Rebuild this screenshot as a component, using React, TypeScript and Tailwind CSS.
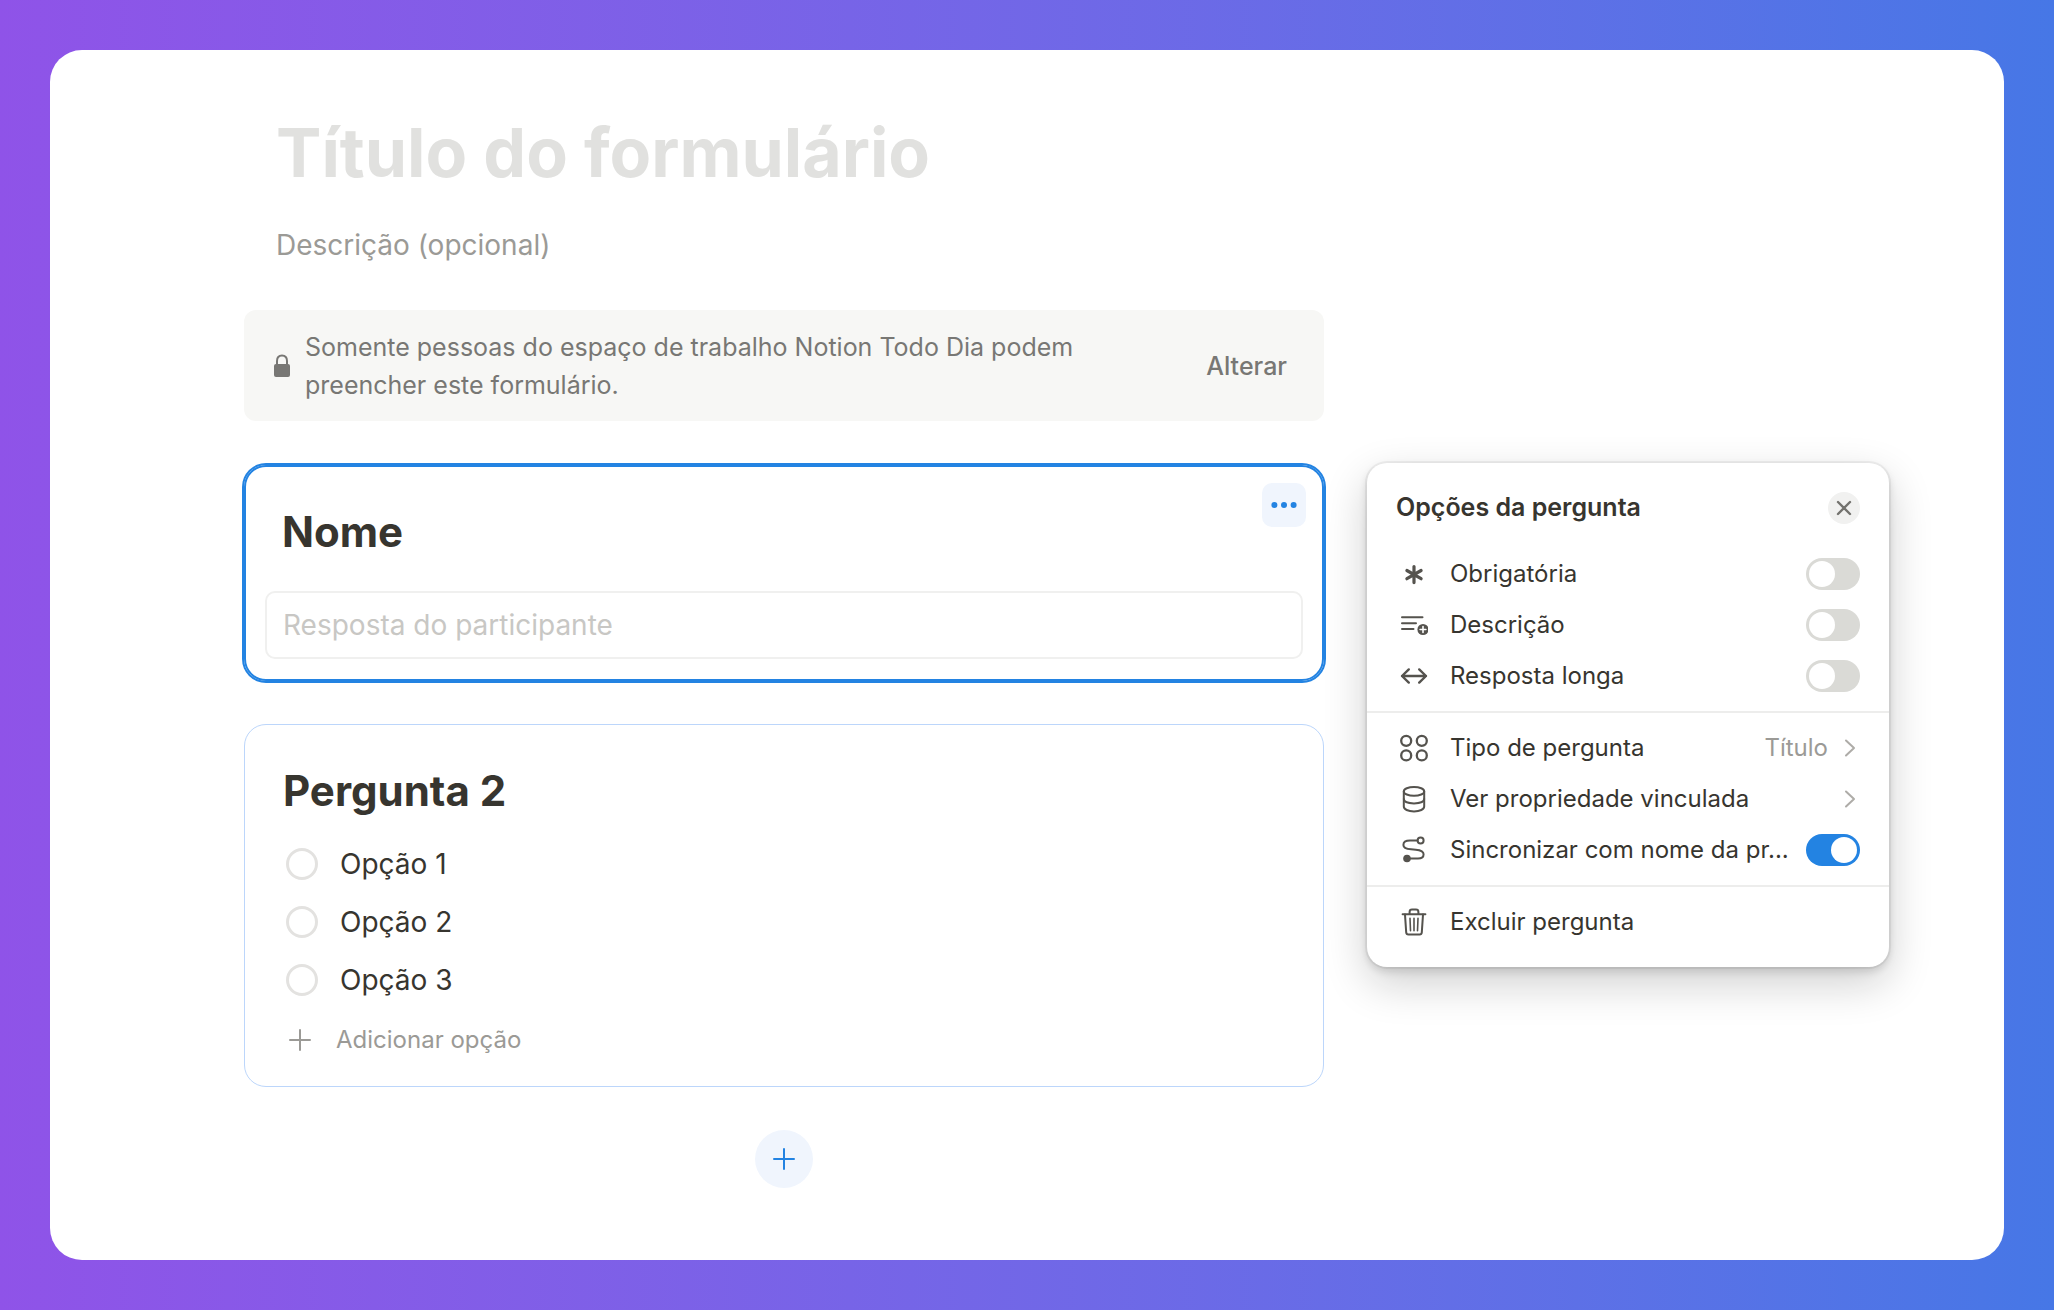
import React from "react";

type IconProps = { children: React.ReactNode; className?: string };

// Shared frame for the 28px menu icons
const Icon: React.FC<IconProps> = ({ children, className = "text-[#55534e]" }) => (
  <svg
    viewBox="0 0 28 28"
    fill="none"
    stroke="currentColor"
    strokeWidth="2"
    strokeLinecap="round"
    strokeLinejoin="round"
    className={`size-7 shrink-0 ${className}`}
    aria-hidden="true"
  >
    {children}
  </svg>
);

const AsteriskIcon = () => (
  <Icon>
    <path d="M14 6.6v16M6.9 10.5l14.2 8.2M21.1 10.5L6.9 18.7" strokeWidth="3.2" />
  </Icon>
);

const DescriptionIcon = () => (
  <Icon>
    <path d="M2 6.3h20.5M2 12.3h14M2 18h11.5" />
    <circle cx="23" cy="18.5" r="5.6" fill="currentColor" stroke="none" />
    <path d="M23 15.6v5.8M20.1 18.5h5.8" stroke="white" strokeWidth="1.6" />
  </Icon>
);

const WidthIcon = () => (
  <Icon>
    <path d="M2 14h24M8.8 7.4L2 14l6.800 6.600M19.200 7.400L26 14l-6.800 6.600" strokeWidth="2.4" />
  </Icon>
);

const CirclesIcon = () => (
  <Icon>
    <circle cx="6.2" cy="6.8" r="5" strokeWidth="2.3" />
    <circle cx="21.8" cy="6.8" r="5" strokeWidth="2.3" />
    <circle cx="6.2" cy="21.4" r="5" strokeWidth="2.3" />
    <circle cx="21.8" cy="21.4" r="5" strokeWidth="2.3" />
  </Icon>
);

const DatabaseIcon = () => (
  <Icon>
    <ellipse cx="14" cy="6.4" rx="10.2" ry="4.4" />
    <path d="M3.8 6.4v15.2c0 2.7 4.2 4.8 10.2 4.8s10.2-2.1 10.2-4.8V6.4" />
    <path d="M3.8 14c0 2.6 4.2 4.4 10.2 4.4s10.2-1.8 10.2-4.4" />
  </Icon>
);

const RouteIcon = () => (
  <Icon>
    <circle cx="20.6" cy="4.6" r="3" />
    <path d="M17.4 4.6H10c-4.2 0-6.6 1.8-6.6 4.3 0 3.1 3.2 4.1 7.6 4.4l4.8.4c4.8.4 7.8 1.7 7.8 4.6 0 2.6-2.2 4.2-5.6 4.2H8" />
    <circle cx="7" cy="22.5" r="3.8" fill="currentColor" stroke="none" />
  </Icon>
);

const TrashIcon = () => (
  <Icon>
    <path d="M2.6 6.3h22.8M9.6 6V4c0-1.5.9-2.4 2.4-2.4h4c1.5 0 2.400.9 2.400 2.400v2" />
    <path d="M5 6.6l1.2 17.8c.1 1.3.9 2.1 2.2 2.1h11.2c1.3 0 2.1-.8 2.2-2.1L23 6.6" />
    <path d="M10 10.3l.5 12.4M14 10.3v12.4M18 10.3l-.5 12.4" strokeWidth="1.6" />
  </Icon>
);

const PlusIcon: React.FC<{ className: string }> = ({ className }) => (
  <Icon className={className}>
    <path d="M14 4v20M4 14h20" />
  </Icon>
);

const Chevron = () => (
  <svg
    viewBox="0 0 20 20"
    fill="none"
    stroke="#aeaca8"
    strokeWidth="2"
    strokeLinecap="round"
    strokeLinejoin="round"
    className="size-5 shrink-0"
    aria-hidden="true"
  >
    <path d="M6 2.5l8 7.5-8 7.5" />
  </svg>
);

type ToggleRowProps = {
  id: string;
  label: string;
  icon: React.ReactNode;
  checked?: boolean;
};

const ToggleRow: React.FC<ToggleRowProps> = ({ id, label, icon, checked }) => (
  <div className="flex h-[50px] items-center pr-[29px] pl-[33px]">
    {icon}
    <label htmlFor={id} className="ml-[22px] flex-1 whitespace-nowrap">
      {label}
    </label>
    <input
      id={id}
      type="checkbox"
      role="switch"
      defaultChecked={checked}
      className="flex h-8 w-[54px] shrink-0 cursor-pointer appearance-none items-center rounded-full bg-[#dadad6] px-[3px] before:size-[26px] before:rounded-full before:bg-white checked:justify-end checked:bg-[#2383e2]"
    />
  </div>
);

type MenuRowProps = {
  label: string;
  icon: React.ReactNode;
  value?: string;
  chevron?: boolean;
};

const MenuRow: React.FC<MenuRowProps> = ({ label, icon, value, chevron }) => (
  <button type="button" className="flex h-[50px] items-center pr-[29px] pl-[33px] text-left">
    {icon}
    <span className="ml-[22px] flex-1">{label}</span>
    {value && <span className="mr-3 text-[#9b9a96]">{value}</span>}
    {chevron && <Chevron />}
  </button>
);

// Floating panel on the right of the selected question
const QuestionOptions = () => (
  <aside
    className="mt-[413px] flex w-[522px] shrink-0 flex-col rounded-[20px] bg-white pt-1 pb-5 text-2xl text-[#37352f] shadow-[0_0_0_2px_rgba(15,15,15,0.05),0_4px_8px_rgba(15,15,15,0.14),0_16px_44px_rgba(15,15,15,0.2)]"
    aria-label="Opções da pergunta"
  >
    <header className="flex h-[82px] items-center justify-between px-[29px]">
      <h2 className="text-[25px] font-semibold">Opções da pergunta</h2>
      <button
        type="button"
        aria-label="Fechar"
        className="flex size-8 items-center justify-center rounded-full bg-[#f1f1f0]"
      >
        <svg viewBox="0 0 16 16" className="size-4" stroke="#73726e" strokeWidth="2.4" strokeLinecap="round">
          <path d="M2 2l12 12M14 2L2 14" />
        </svg>
      </button>
    </header>

    <div className="flex flex-col gap-px border-b-2 border-[#ededec] pb-[10px]">
      <ToggleRow id="required" label="Obrigatória" icon={<AsteriskIcon />} />
      <ToggleRow id="description" label="Descrição" icon={<DescriptionIcon />} />
      <ToggleRow id="long-answer" label="Resposta longa" icon={<WidthIcon />} />
    </div>

    <div className="flex flex-col gap-px border-b-2 border-[#ededec] py-[10px]">
      <MenuRow label="Tipo de pergunta" icon={<CirclesIcon />} value="Título" chevron />
      <MenuRow label="Ver propriedade vinculada" icon={<DatabaseIcon />} chevron />
      <ToggleRow id="sync-name" label="Sincronizar com nome da pr..." icon={<RouteIcon />} checked />
    </div>

    <div className="flex flex-col pt-[10px]">
      <MenuRow label="Excluir pergunta" icon={<TrashIcon />} />
    </div>
  </aside>
);

const options = ["Opção 1", "Opção 2", "Opção 3"];

const App: React.FC = () => {
  return (
    <div className="flex min-h-screen bg-linear-to-r from-[#8f53e8] to-[#4677e6] p-[50px] font-['Inter','Liberation_Sans',sans-serif]">
      <main className="flex min-w-0 flex-1 items-start gap-[43px] rounded-[32px] bg-white pr-[115px] pl-[194px]">
        <form className="flex min-w-0 flex-1 flex-col pt-[60px] pb-[72px]">
          <input
            aria-label="Título do formulário"
            placeholder="Título do formulário"
            className="mx-8 h-[84px] text-[68px] font-bold outline-none placeholder:text-[#e1e1df]"
          />
          <input
            aria-label="Descrição"
            placeholder="Descrição (opcional)"
            className="mx-8 mt-[31px] h-10 text-[28px] outline-none placeholder:text-[#9b9a96]"
          />

          {/* Access notice */}
          <div className="mt-[45px] flex items-center rounded-xl bg-[#f7f7f5] pt-[18px] pr-[37px] pb-[17px] pl-[29px] text-[25px] leading-[38px] text-[#787774]">
            <svg viewBox="0 0 18 24" className="h-6 w-[18px] shrink-0" aria-hidden="true">
              <rect x="1" y="10" width="16" height="13" rx="2" fill="currentColor" />
              <path d="M4 11V7c0-3.4 2-5.500 5-5.500s5 2.100 5 5.500v4" fill="none" stroke="currentColor" strokeWidth="2" />
            </svg>
            <p className="ml-[14px] max-w-[780px]">
              Somente pessoas do espaço de trabalho Notion Todo Dia podem preencher este formulário.
            </p>
            <button type="button" className="ml-auto font-medium">
              Alterar
            </button>
          </div>

          {/* Selected question */}
          <section className="relative mt-11 flex flex-col rounded-[22px] border-2 border-[#2383e2] px-[19px] pt-[39px] pb-5 ring-2 ring-[#2383e2]">
            <button
              type="button"
              aria-label="Mais opções"
              className="absolute top-4 right-4 flex size-11 items-center justify-center rounded-[10px] bg-[#f0f5fd]"
            >
              <svg viewBox="0 0 26 8" className="h-2 w-[26px] fill-[#2383e2]">
                <circle cx="3.4" cy="4" r="3" />
                <circle cx="13" cy="4" r="3" />
                <circle cx="22.6" cy="4" r="3" />
              </svg>
            </button>
            <label htmlFor="name" className="mx-[17px] text-[42px] leading-[52px] font-bold text-[#37352f]">
              Nome
            </label>
            <input
              id="name"
              placeholder="Resposta do participante"
              className="mt-[33px] h-[68px] rounded-[10px] border-2 border-[#f0f0ef] px-4 text-[28px] outline-none placeholder:text-[#c8c7c4]"
            />
          </section>

          {/* Multiple choice question */}
          <fieldset className="mt-[43px] flex flex-col rounded-[22px] border border-[#bcd6fb] px-[38px] pt-10 pb-6 text-[28px] text-[#37352f]">
            <h3 className="text-[42px] leading-[52px] font-bold">Pergunta 2</h3>
            <div className="mt-[18px] flex flex-col">
              {options.map((option) => (
                <label key={option} className="flex h-[58px] items-center gap-[22px] pl-[3px]">
                  <input
                    type="radio"
                    name="question-2"
                    className="size-8 appearance-none rounded-full border-[3px] border-[#e3e2e0] checked:border-[#2383e2]"
                  />
                  {option}
                </label>
              ))}
            </div>
            <button
              type="button"
              className="mt-[9px] flex h-11 items-center gap-[22px] self-start pl-[3px] text-2xl text-[#9b9a96]"
            >
              <PlusIcon className="text-[#9b9a96]" />
              Adicionar opção
            </button>
          </fieldset>

          <button
            type="button"
            aria-label="Adicionar pergunta"
            className="mt-[43px] flex size-[58px] items-center justify-center self-center rounded-full bg-[#f0f5fd]"
          >
            <PlusIcon className="text-[#2383e2]" />
          </button>
        </form>

        <QuestionOptions />
      </main>
    </div>
  );
};

export default App;
